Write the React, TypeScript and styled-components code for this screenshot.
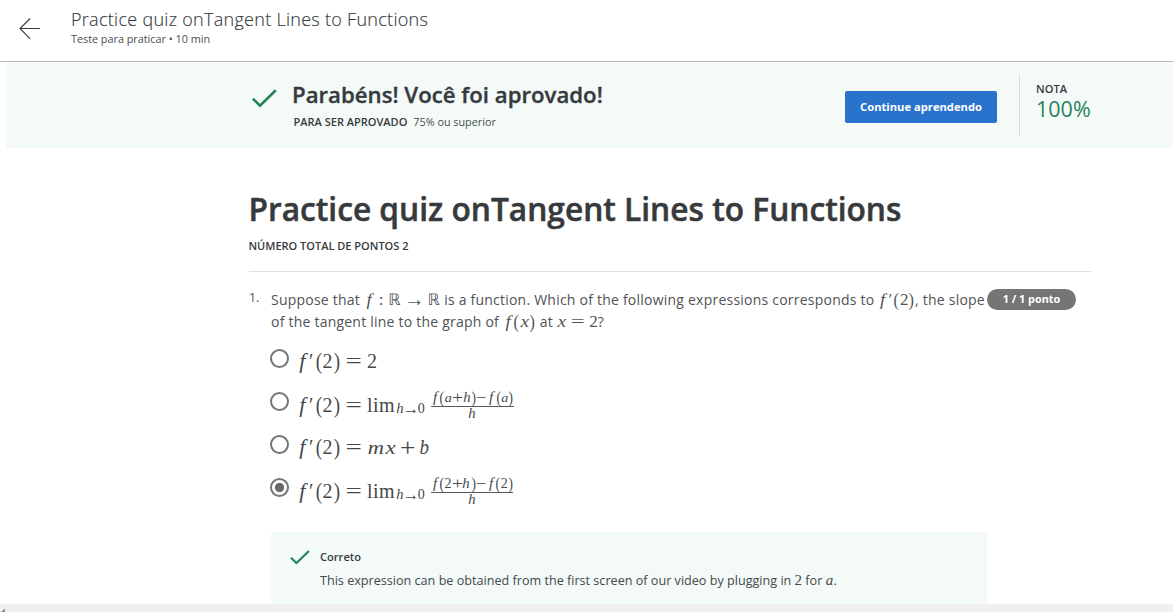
import React from 'react';
import styled, { createGlobalStyle } from 'styled-components';

const Global = createGlobalStyle`
  * { box-sizing: border-box; }
  body { margin: 0; background: #fff; color: #373a3c; font-family: "Open Sans", sans-serif; }
  h1, h2, p { margin: 0; }
`;

const Page = styled.div`
  height: 612px;
  display: flex;
  flex-direction: column;
  overflow: hidden;
  white-space: nowrap;
`;

const Header = styled.header`
  flex: none;
  height: 62px;
  display: flex;
  align-items: flex-start;
  padding: 7px 0 0 19px;
  border-bottom: 1px solid #b9b9b9;
`;

const BackButton = styled.button`
  width: 22px;
  height: 22px;
  margin: 11px 30px 0 0;
  padding: 0;
  border: 0;
  background: none;
  svg { display: block; }
`;

const HeaderTitle = styled.div`
  font-size: 18px;
  font-weight: 300;
  line-height: 24px;
  letter-spacing: 0.285px;
  -webkit-text-stroke: 0.15px currentColor;
`;

const HeaderMeta = styled.div`
  color: #4a4d4f;
  font-size: 10.8px;
  line-height: 16px;
`;

const Banner = styled.section`
  flex: none;
  height: 86px;
  margin-left: 6px;
  padding-left: 246px;
  display: flex;
  align-items: flex-start;
  background: #f3faf8;
`;

const BannerText = styled.div`
  width: 553px;
  margin-left: 15px;
  padding-top: 18px;
`;

const BannerTitle = styled.h2`
  font-size: 22.2px;
  font-weight: 600;
  line-height: 30px;
  -webkit-text-stroke: 0.35px currentColor;
`;

const BannerNote = styled.p`
  margin: 4px 0 0 1.5px;
  color: #4a4d4f;
  font-size: 10.8px;
  line-height: 16px;
  b { margin-right: 6px; color: #373a3c; font-size: 11px; font-weight: 600; }
`;

const CheckSlot = styled.span<{ $top: number }>`
  flex: none;
  padding-top: ${(p) => p.$top}px;
  svg { display: block; }
`;

const ContinueButton = styled.button`
  width: 152px;
  height: 32px;
  margin-top: 29px;
  padding: 0 0 1px;
  border: 0;
  border-radius: 2px;
  background: #2a73cc;
  color: #fff;
  font: 700 11.2px "Open Sans", sans-serif;
`;

const Grade = styled.div`
  height: 62px;
  margin: 12px 0 0 22px;
  padding: 8px 0 0 16px;
  border-left: 1px solid #d9dfde;
`;

const GradeLabel = styled.div`
  font-size: 11.1px;
  font-weight: 600;
  line-height: 14px;
`;

const GradeValue = styled.div`
  color: #2a8257;
  font-size: 21.5px;
  line-height: 26px;
`;

const Content = styled.main`
  flex: 1;
  min-height: 0;
  width: 842px;
  margin-left: 249px;
  padding-top: 40px;
  overflow: hidden;
`;

const QuizTitle = styled.h1`
  margin-left: -0.5px;
  font-size: 31.7px;
  font-weight: 600;
  line-height: 42px;
  -webkit-text-stroke: 0.5px currentColor;
`;

const Points = styled.p`
  height: 42px;
  padding-top: 8px;
  border-bottom: 1px solid #dfdfdf;
  font-size: 11px;
  font-weight: 600;
  line-height: 16px;
  text-indent: -0.5px;
`;

const Question = styled.section`
  display: flex;
  align-items: flex-start;
  padding-top: 17px;
`;

const QuestionNumber = styled.span`
  width: 22px;
  color: #4b4e50;
  font-size: 12.2px;
  line-height: 18px;
`;

const QuestionBody = styled.div`
  width: 716px;
`;

const Prompt = styled.p`
  height: 44px;
  color: #505355;
  font-size: 14px;
  line-height: 22px;
  letter-spacing: 0.225px;
`;

const PointsPill = styled.span`
  width: 89px;
  height: 21px;
  border-radius: 11px;
  background: #757575;
  color: #fff;
  font-size: 10.9px;
  font-weight: 700;
  line-height: 20px;
  text-align: center;
`;

const Options = styled.div`
  padding-top: 4px;
`;

const Option = styled.label`
  height: 43px;
  display: flex;
  align-items: flex-start;
`;

const Radio = styled.span<{ $on?: boolean }>`
  flex: none;
  width: 19px;
  height: 19px;
  margin: 12px 8px 0 -1px;
  border: 2px solid #757575;
  border-radius: 50%;
  background: ${(p) => (p.$on ? 'radial-gradient(circle, #6a6a6a 4.3px, transparent 5px)' : 'none')};
`;

const Formula = styled.span<{ $drop: number }>`
  display: flex;
  align-items: flex-start;
  padding-top: ${(p) => p.$drop}px;
  color: #45484a;
  font: 20px/20px "Liberation Serif", serif;
`;

const InlineMath = styled.span`
  font: 17px/17px "Liberation Serif", serif;
  letter-spacing: 0;
`;

const Glyph = styled.span<{ $w: number; $gap?: number; $sx?: number; $sy?: number; $italic?: boolean }>`
  display: inline-flex;
  justify-content: center;
  width: ${(p) => p.$w}em;
  margin: 0 ${(p) => p.$gap ?? 0}em;
  font-style: ${(p) => (p.$italic ? 'italic' : 'normal')};
  transform: scale(${(p) => p.$sx ?? 1}, ${(p) => p.$sy ?? 1});
`;

const DoubleStruck = styled(Glyph)`
  font-family: "DejaVu Sans", sans-serif;
  font-size: 0.92em;
`;

const Limit = styled.span`
  width: 1.389em;
  letter-spacing: 0.022em;
`;

const Subscript = styled.span`
  margin: 7px 6px 0 1px;
  font-size: 14px;
  line-height: 14px;
`;

const Fraction = styled.span`
  display: flex;
  flex-direction: column;
  align-items: center;
  margin-top: -4px;
  font-size: 14px;
  line-height: 14px;
`;

const Numerator = styled.span`
  height: 16px;
  border-bottom: 1px solid #55585a;
`;

const Feedback = styled.section`
  height: 90px;
  margin-top: 23px;
  padding-left: 19px;
  display: flex;
  align-items: flex-start;
  border-radius: 3px;
  background: #f3faf8;
`;

const FeedbackText = styled.div`
  padding: 17px 0 0 10px;
`;

const FeedbackTitle = styled.div`
  font-size: 11.1px;
  font-weight: 600;
  line-height: 16px;
`;

const FeedbackNote = styled.p`
  margin-top: 5px;
  color: #45484a;
  font-size: 12.62px;
  line-height: 22px;
`;

const NoteMath = styled(InlineMath)`
  font-size: 15px;
  line-height: 15px;
`;

const ScrollTrack = styled.footer`
  flex: none;
  height: 8px;
  background: #f0f0f0;
  svg { display: block; }
`;

// Per symbol: advance and side gap in em, then horizontal and vertical scale.
const metrics: Record<string, [number, number, number, number?]> = {
  f: [0.53, 0, 1.1],
  a: [0.529, 0, 1.0, 0.95],
  b: [0.429, 0, 0.95],
  h: [0.576, 0, 1.05],
  m: [0.878, 0, 1.12, 0.95],
  x: [0.572, 0, 1.15, 0.95],
  '′': [0.36, 0, 1],
  '(': [0.389, 0, 0.95, 1.15],
  ')': [0.389, 0, 0.95, 1.15],
  '0': [0.5, 0, 1],
  '2': [0.5, 0, 1],
  ':': [0.278, 0.278, 1],
  '→': [1, 0.278, 1.2, 1.2],
  '=': [0.778, 0.278, 1.45],
  '+': [0.778, 0.222, 1.4, 1.25],
  '−': [0.778, 0.222, 1.35],
};

function Symbols({ text, tight }: { text: string; tight?: boolean }) {
  return (
    <>
      {[...text].map((c, i) => {
        if (c === 'ℝ') return <DoubleStruck key={i} $w={0.82}>{c}</DoubleStruck>;
        const [w, gap, sx, sy] = metrics[c];
        const width = c === 'f' && text[i + 1] !== '′' ? 0.597 : w;
        return (
          <Glyph key={i} $w={width} $gap={tight ? 0 : gap} $sx={sx} $sy={sy} $italic={/[a-z]/.test(c)}>
            {c}
          </Glyph>
        );
      })}
    </>
  );
}

function Check({ width, height }: { width: number; height: number }) {
  return (
    <svg width={width} height={height} viewBox="0 0 25 19" fill="none" stroke="#1f8354" strokeWidth="2.6">
      <path d="M1 9.8 8 16.6 23.8 1.2" />
    </svg>
  );
}

function LimitFormula({ top }: { top: string }) {
  return (
    <>
      <Symbols text="f′(2)=" />
      <Limit>lim</Limit>
      <Subscript><Symbols text="h→0" tight /></Subscript>
      <Fraction>
        <Numerator><Symbols text={top} tight /></Numerator>
        <span><Symbols text="h" /></span>
      </Fraction>
    </>
  );
}

export default function App() {
  return (
    <Page>
      <Global />
      <Header>
        <BackButton aria-label="Voltar">
          <svg width="22" height="22" fill="none" stroke="#373a3c" strokeWidth="1.1">
            <path d="M21 10.5H1M11.2.5 1 10.5 11.2 20.8" />
          </svg>
        </BackButton>
        <div>
          <HeaderTitle>Practice quiz onTangent Lines to Functions</HeaderTitle>
          <HeaderMeta>Teste para praticar • 10 min</HeaderMeta>
        </div>
      </Header>
      <Banner>
        <CheckSlot $top={27}><Check width={25} height={19} /></CheckSlot>
        <BannerText>
          <BannerTitle>Parabéns! Você foi aprovado!</BannerTitle>
          <BannerNote><b>PARA SER APROVADO</b>75% ou superior</BannerNote>
        </BannerText>
        <ContinueButton>Continue aprendendo</ContinueButton>
        <Grade>
          <GradeLabel>NOTA</GradeLabel>
          <GradeValue>100%</GradeValue>
        </Grade>
      </Banner>
      <Content>
        <QuizTitle>Practice quiz onTangent Lines to Functions</QuizTitle>
        <Points>NÚMERO TOTAL DE PONTOS 2</Points>
        <Question>
          <QuestionNumber>1.</QuestionNumber>
          <QuestionBody>
            <Prompt>
              Suppose that <InlineMath><Symbols text="f:ℝ→ℝ" /></InlineMath> is a function. Which of the
              following expressions corresponds to <InlineMath><Symbols text="f′(2)" /></InlineMath>, the slope
              <br />
              of the tangent line to the graph of <InlineMath><Symbols text="f(x)" /></InlineMath> at{' '}
              <InlineMath><Symbols text="x=2" /></InlineMath>?
            </Prompt>
            <Options>
              <Option><Radio /><Formula $drop={14.4}><Symbols text="f′(2)=2" /></Formula></Option>
              <Option><Radio /><Formula $drop={15.4}><LimitFormula top="f(a+h)−f(a)" /></Formula></Option>
              <Option><Radio /><Formula $drop={14.4}><Symbols text="f′(2)=mx+b" /></Formula></Option>
              <Option><Radio $on /><Formula $drop={15.4}><LimitFormula top="f(2+h)−f(2)" /></Formula></Option>
            </Options>
            <Feedback>
              <CheckSlot $top={18}><Check width={20} height={15} /></CheckSlot>
              <FeedbackText>
                <FeedbackTitle>Correto</FeedbackTitle>
                <FeedbackNote>
                  This expression can be obtained from the first screen of our video by plugging in{' '}
                  <NoteMath><Symbols text="2" /></NoteMath> for <NoteMath><Symbols text="a" /></NoteMath>.
                </FeedbackNote>
              </FeedbackText>
            </Feedback>
          </QuestionBody>
          <PointsPill>1 / 1 ponto</PointsPill>
        </Question>
      </Content>
      <ScrollTrack>
        <svg width="6" height="8"><path d="M1 8 5 4.5V8Z" fill="#8a8a8a" /></svg>
      </ScrollTrack>
    </Page>
  );
}
